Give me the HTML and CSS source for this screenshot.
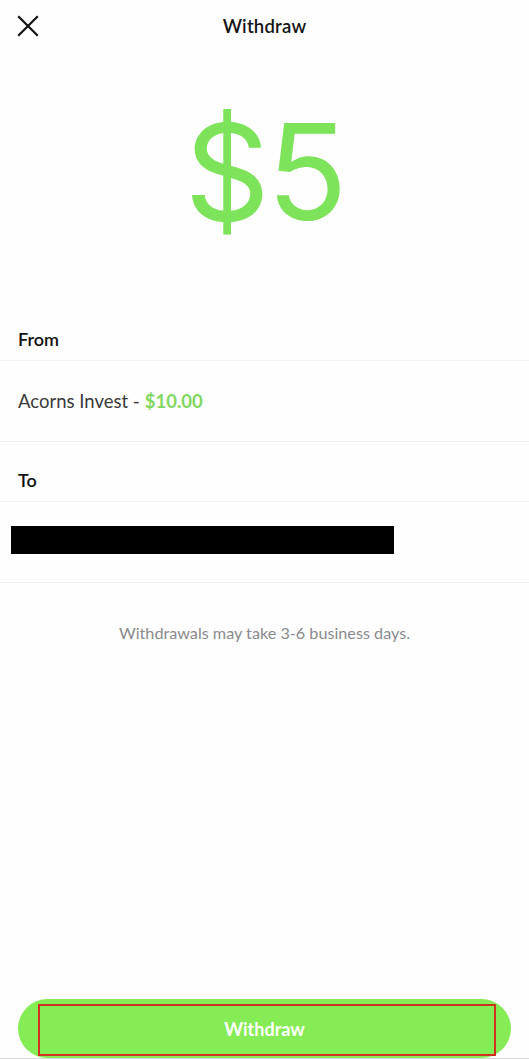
FILE: index.html
```html
<!DOCTYPE html>
<html>
<head>
<meta charset="utf-8">
<link rel="stylesheet" href="styles.css">
</head>
<body>
<div class="screen">
  <header class="topbar">
    <svg class="close" width="22" height="22" viewBox="0 0 22 22">
      <path d="M2 2 L20 20 M20 2 L2 20" stroke="#111" stroke-width="2.2" stroke-linecap="square" fill="none"/>
    </svg>
    <div class="title">Withdraw</div>
  </header>

  <div class="amount">$5</div>

  <div class="label-row first">From</div>
  <div class="value-row">Acorns Invest - <span class="balance">$10.00</span></div>
  <div class="label-row second">To</div>
  <div class="value-row redacted-row"><div class="redacted"></div></div>

  <p class="note">Withdrawals may take 3-6 business days.</p>

  <div class="spacer"></div>

  <div class="button-wrap">
    <button class="withdraw-btn">Withdraw</button>
    <div class="annotation"></div>
  </div>
</div>
</body>
</html>
```

FILE: styles.css
```css
* { box-sizing: border-box; }
html, body { margin: 0; padding: 0; }
body {
  background: #fefefe;
  font-family: "Lato", "Open Sans", sans-serif;
  color: #111;
}
.screen {
  width: 529px;
  height: 1059px;
  display: flex;
  flex-direction: column;
  overflow: hidden;
}
.topbar {
  height: 52px;
  display: flex;
  align-items: center;
  justify-content: center;
  position: relative;
}
.close {
  position: absolute;
  left: 17px;
  top: 15px;
}
.title {
  font-size: 18.5px;
  font-weight: 600;
  color: #151515;
  letter-spacing: 0.2px;
}
.amount {
  margin-top: 52px;
  height: 135px;
  line-height: 135px;
  font-family: "Inter", "Lato", sans-serif;
  font-size: 133px;
  font-weight: 400;
  color: #7de35a;
  text-align: center;
  margin-bottom: 79px;
  letter-spacing: -3px;
}
.label-row {
  line-height: 42px;
  font-size: 18px;
  font-weight: 600;
  padding-left: 18px;
  color: #111;
  border-bottom: 1px solid #f1f1f1;
}
.label-row.second { padding-top: 17px; }
.value-row {
  height: 81px;
  display: flex;
  align-items: center;
  padding-left: 18px;
  font-size: 18.5px;
  color: #3a3a3a;
  border-bottom: 1px solid #f1f1f1;
}
.balance {
  color: #7fd85e;
  font-weight: 700;
  margin-left: 5px;
}
.redacted-row {
  padding-left: 11px;
  align-items: flex-start;
  padding-top: 24px;
}
.redacted {
  width: 383px;
  height: 28px;
  background: #000;
}
.note {
  margin: 38px 0 0;
  text-align: center;
  font-size: 16.2px;
  color: #8a8a8e;
  line-height: 24px;
}
.spacer { flex: 1; }
.button-wrap {
  position: relative;
  padding: 0 18px;
  height: 60px;
  border-bottom: 1px solid #d8d8d8;
}
.withdraw-btn {
  width: 100%;
  height: 59px;
  border: none;
  border-radius: 30px;
  background: #86ec55;
  color: #fff;
  font-family: "Lato", "Open Sans", sans-serif;
  font-size: 18px;
  font-weight: 700;
  padding: 0;
}
.annotation {
  position: absolute;
  left: 38px;
  top: 5px;
  width: 458px;
  height: 52px;
  border: 2px solid #d0301f;
}
```
